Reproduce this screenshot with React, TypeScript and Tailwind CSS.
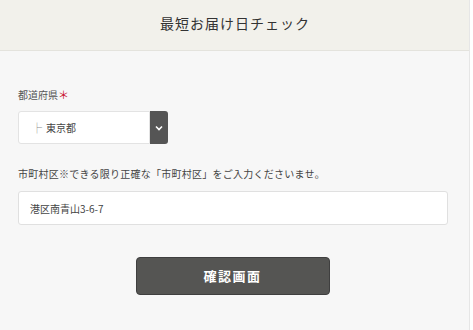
import React from "react";

export default function App() {
  return (
    <div
      className="w-[473px] h-[330px] bg-white overflow-hidden"
      style={{ fontFamily: '"Noto Sans CJK JP", "Noto Sans", sans-serif' }}
    >
      <div className="w-[470px] h-[330px] border-r border-[#e6e6e6] bg-[#f7f7f7] flex flex-col">
        <div className="h-[51px] bg-[#f2f1eb] border-b border-[#e4e3dd] flex items-center justify-center pb-[3px]">
          <h1 className="text-[14px] tracking-[1px] text-[#333] pl-[1px]">最短お届け日チェック</h1>
        </div>
        <div className="px-[18px] pt-[36px] flex flex-col">
          <div className="text-[10px] leading-[14px] text-[#555]">
            都道府県<span className="text-[#c8102e] text-[11px]">＊</span>
          </div>
          <div className="mt-[9px] flex w-[150px] h-[33px]">
            <div className="flex-1 bg-white border border-[#e3e3e3] rounded-l-[3px] flex items-center pl-[13px] text-[10px] text-[#444]">
              <span className="text-[#888] mr-[4px]">├</span>東京都
            </div>
            <div className="w-[18px] bg-[#555] rounded-r-[3px] flex items-center justify-center">
              <svg width="8" height="6" viewBox="0 0 8 6">
                <path d="M1 1.5 L4 4.5 L7 1.5" stroke="#fff" strokeWidth="1.6" fill="none" />
              </svg>
            </div>
          </div>
          <div className="mt-[23px] text-[10px] leading-[14px] tracking-[0.25px] text-[#444]">
            市町村区※できる限り正確な「市町村区」をご入力くださいませ。
          </div>
          <div className="mt-[10px] w-[430px] h-[34px] bg-white border border-[#e0e0e0] rounded-[3px] flex items-center pl-[11px] text-[10px] text-[#444]">
            港区南青山3-6-7
          </div>
          <div className="mt-[32px] flex justify-center">
            <button className="w-[194px] h-[38px] bg-[#555553] border border-[#3f3f3f] rounded-[4px] text-white text-[13px] font-bold tracking-[1.5px] mr-[4px]">
              確認画面
            </button>
          </div>
        </div>
      </div>
    </div>
  );
}
